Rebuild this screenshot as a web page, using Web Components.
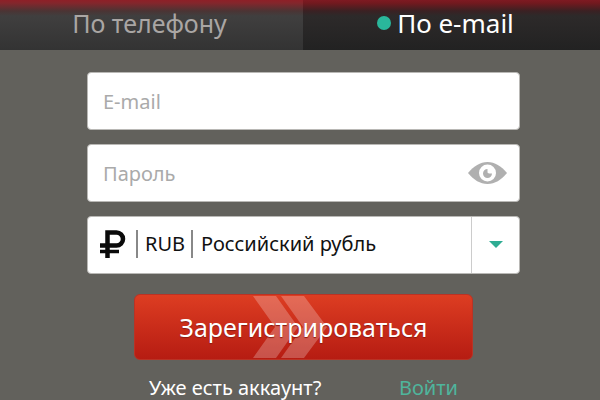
<!DOCTYPE html>
<html lang="ru">
<head>
<meta charset="utf-8">
<title>Регистрация</title>
<style>
	body {
		margin: 0;
		min-height: 100vh;
		background: #62615c;
		color: #fff;
		font-family: "Noto Sans", "Open Sans", sans-serif;
		font-size: 20px;
	}
</style>
</head>
<body>

<template id="tab-bar">
	<style>
		:host {
			display: grid;
			grid-template-columns: 303fr 297fr;
			height: 50px;
			background: linear-gradient(#8e2028 0, #84262c 3px, #4b3434 11px, #403f3f 16px, #333 100%);
		}
	</style>
	<slot></slot>
</template>

<template id="tab-item">
	<style>
		:host {
			display: block;
		}
		button {
			display: flex;
			align-items: center;
			justify-content: center;
			gap: 6px;
			width: 100%;
			height: 100%;
			margin: 0;
			padding: 0 4px 5px 0;
			border: 0;
			background: none;
			color: #aaa6a4;
			font: inherit;
			font-size: 25px;
			cursor: pointer;
		}
		:host([active]) button {
			padding-right: 12px;
			background: linear-gradient(#7e1a22 0, #73191f 3px, #3a2123 11px, #2d2a2a 16px, #222 100%);
			color: #fff;
			font-size: 26px;
		}
		:host([active]) button::before {
			content: "";
			width: 14px;
			height: 14px;
			border-radius: 50%;
			background: #2ab79b;
		}
	</style>
	<button type="button"><slot></slot></button>
</template>

<template id="text-field">
	<style>
		:host {
			display: flex;
			align-items: center;
			box-sizing: border-box;
			height: 58px;
			padding: 0 12px 0 15px;
			border: 1px solid #b9b8b5;
			border-radius: 4px;
			background: #fff;
		}
		input {
			flex: 1;
			min-width: 0;
			padding: 0;
			border: 0;
			outline: 0;
			background: none;
			color: #111;
			font: inherit;
		}
		input::placeholder {
			color: #aaa;
			opacity: 1;
		}
	</style>
	<input>
	<slot></slot>
</template>

<template id="reveal-button">
	<style>
		:host {
			display: block;
		}
		button {
			display: block;
			padding: 0;
			border: 0;
			background: none;
			cursor: pointer;
		}
		svg {
			display: block;
		}
	</style>
	<button type="button" aria-label="Показать пароль">
		<svg width="39" height="22" viewBox="0 0 39 22">
			<path d="M0 11C6 4 12 0 19.500 0S33 4 39 11C33 18 27 22 19.500 22S6 18 0 11Z" fill="#b0b0b0"/>
			<circle cx="19.500" cy="11" r="8.500" fill="#fff"/>
			<path d="M19.500 7A4.500 4.500 0 1 0 24 11.500L21 11.500A2 2 0 0 1 19.500 9Z" fill="#b0b0b0"/>
		</svg>
	</button>
</template>

<template id="currency-field">
	<style>
		:host {
			display: flex;
			align-items: center;
			box-sizing: border-box;
			height: 58px;
			padding: 0 0 2px 12px;
			border: 1px solid #b9b8b5;
			border-radius: 4px;
			background: #fff;
			color: #111;
		}
		svg {
			flex: none;
		}
		label {
			margin: 0 6px 0 10px;
			padding-left: 7px;
			border-left: 2px solid #888;
			line-height: 28px;
		}
		select {
			flex: 1;
			min-width: 0;
			height: 28px;
			padding: 0 0 0 8px;
			border: 0;
			border-left: 2px solid #888;
			border-radius: 0;
			outline: 0;
			background: none;
			color: inherit;
			font: inherit;
			line-height: 28px;
			appearance: none;
		}
		.arrow {
			display: flex;
			align-items: center;
			justify-content: center;
			align-self: stretch;
			width: 48px;
			margin-bottom: -2px;
			padding-bottom: 2px;
			box-sizing: border-box;
			border-left: 1px solid #ccc;
		}
	</style>
	<svg width="26" height="28" viewBox="0 0 26 28">
		<path d="M7.500 28V2.500H16.500A6.500 6.500 0 0 1 16.500 15.500H0" fill="none" stroke="#0a0a0a" stroke-width="4.500"/>
		<path d="M0 21.500H19" stroke="#0a0a0a" stroke-width="3.500"/>
	</svg>
	<label for="currency"></label>
	<select id="currency"><option></option></select>
	<span class="arrow">
		<svg width="14" height="7" viewBox="0 0 14 7"><path d="M0 0H14L7 7Z" fill="#2fac93"/></svg>
	</span>
</template>

<template id="submit-button">
	<style>
		:host {
			display: block;
		}
		button {
			display: grid;
			place-items: center;
			width: 100%;
			height: 66px;
			padding: 0;
			border: 1px solid #b93325;
			border-radius: 6px;
			background: linear-gradient(#dd3d22, #b61c12);
			color: #fff;
			font: inherit;
			font-size: 25px;
			cursor: pointer;
		}
		svg, span {
			grid-area: 1 / 1;
		}
		span {
			text-shadow: 0 1px 1px #8a1a12;
		}
	</style>
	<button type="submit">
		<svg width="104" height="62" viewBox="0 0 104 62">
			<path d="M1 0H24L46 31L24 62H1L23 31ZM29 0H52L75 31L52 62H29L51 31Z" fill="#fff" fill-opacity=".24"/>
		</svg>
		<span><slot></slot></span>
	</button>
</template>

<template id="signup-form">
	<style>
		:host {
			display: block;
		}
		form {
			display: flex;
			flex-direction: column;
			gap: 14px;
			padding: 22px 80px 0 87px;
		}
		submit-button {
			margin: 6px 47px 0;
		}
		p {
			display: flex;
			justify-content: space-between;
			margin: 0 62px;
			line-height: 28px;
		}
		a {
			color: #4fb59c;
			text-decoration: none;
		}
	</style>
	<form>
		<text-field type="email" label="E-mail"></text-field>
		<text-field type="password" label="Пароль"><reveal-button></reveal-button></text-field>
		<currency-field code="RUB" name="Российский рубль"></currency-field>
		<submit-button>Зарегистрироваться</submit-button>
		<p><span>Уже есть аккаунт?</span><a href="#login">Войти</a></p>
	</form>
</template>

<tab-bar>
	<tab-item>По телефону</tab-item>
	<tab-item active>По e-mail</tab-item>
</tab-bar>
<signup-form></signup-form>

<script>
class TemplateElement extends HTMLElement {
	constructor() {
		super()
		const template = document.getElementById(this.localName)
		this.root = this.attachShadow({mode: 'open'})
		this.root.appendChild(template.content.cloneNode(true))
	}
}

window.customElements.define('tab-bar', class extends TemplateElement {
	constructor() {
		super()
		this.addEventListener('click', event => {
			const item = event.target.closest('tab-item')
			if(!item) return
			for(const tab of this.children) tab.toggleAttribute('active', tab === item)
		})
	}
})

window.customElements.define('tab-item', class extends TemplateElement {})

window.customElements.define('text-field', class extends TemplateElement {
	connectedCallback() {
		this.input = this.root.querySelector('input')
		this.input.type = this.getAttribute('type')
		this.input.placeholder = this.getAttribute('label')
		this.input.setAttribute('aria-label', this.getAttribute('label'))
		this.addEventListener('reveal', () => {
			this.input.type = this.input.type === 'password' ? 'text' : 'password'
		})
	}
})

window.customElements.define('reveal-button', class extends TemplateElement {
	constructor() {
		super()
		this.root.querySelector('button').addEventListener('click', () => {
			this.dispatchEvent(new CustomEvent('reveal', {bubbles: true}))
		})
	}
})

window.customElements.define('currency-field', class extends TemplateElement {
	connectedCallback() {
		this.root.querySelector('label').textContent = this.getAttribute('code')
		this.root.querySelector('option').textContent = this.getAttribute('name')
	}
})

// a button inside a shadow root has no form owner, so the click is passed on
window.customElements.define('submit-button', class extends TemplateElement {
	constructor() {
		super()
		this.root.querySelector('button').addEventListener('click', () => {
			this.closest('form').requestSubmit()
		})
	}
})

window.customElements.define('signup-form', class extends TemplateElement {
	constructor() {
		super()
		this.root.querySelector('form').addEventListener('submit', event => {
			event.preventDefault()
			this.dispatchEvent(new CustomEvent('signup'))
		})
	}
})
</script>
</body>
</html>
